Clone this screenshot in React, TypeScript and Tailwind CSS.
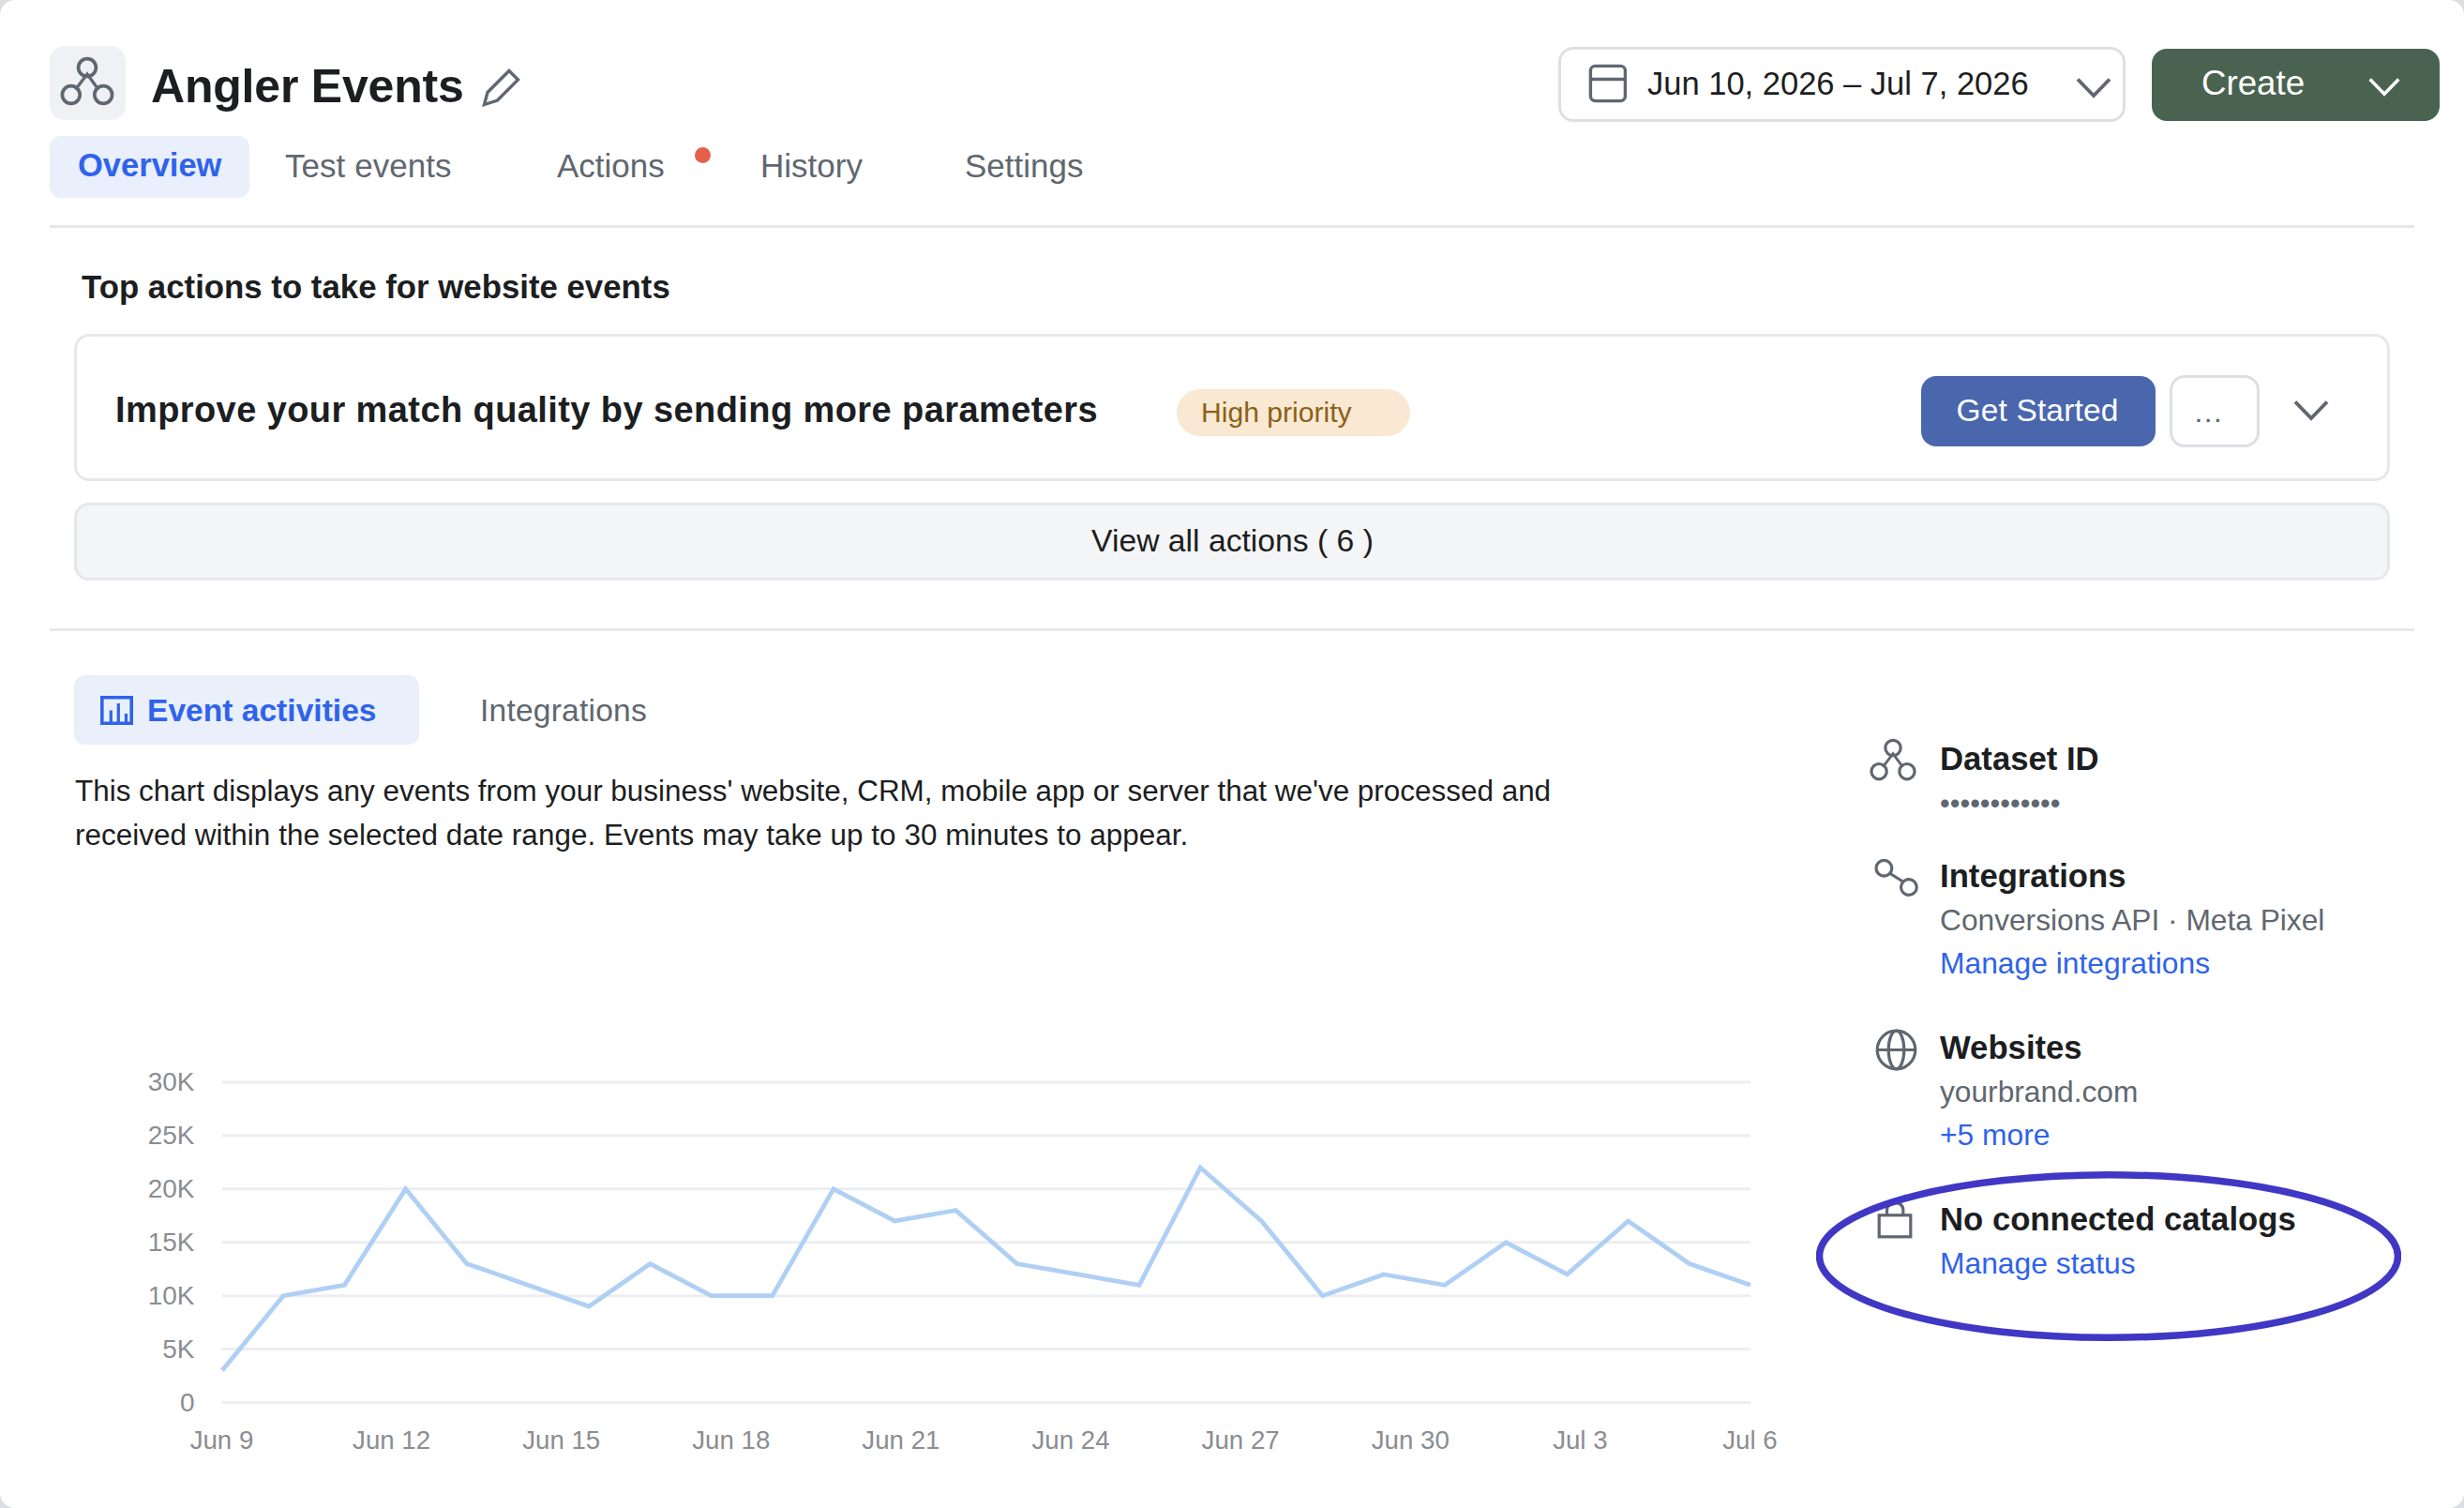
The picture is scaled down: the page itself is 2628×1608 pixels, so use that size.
import React from 'react'

interface IInfoItem {
  title: string
  icon: React.ReactNode
  className: string
  detail?: string
  link?: string
}

const tabs = [
  { label: "Test events", className: "w-[290px] tracking-[0.05px]" },
  { label: "Actions", className: "w-[217px]", dot: true },
  { label: "History", className: "w-[218px]" },
  { label: "Settings", className: "" },
]

// values are in thousands of events
const events = [3, 10, 11, 20, 13, 11, 9, 13, 10, 10, 20, 17, 18, 13, 12, 11, 22, 17, 10, 12, 11, 15, 12, 17, 13, 11]
const yTicks = [30, 25, 20, 15, 10, 5, 0]
const xTicks = ["Jun 9", "Jun 12", "Jun 15", "Jun 18", "Jun 21", "Jun 24", "Jun 27", "Jun 30", "Jul 3", "Jul 6"]

const Chevron = ({ className }: { className: string }) => (
  <svg viewBox="0 0 40 26" className={className} fill="none" stroke="currentColor" strokeWidth="3.9">
    <path d="M3 3.5 L20 21 L37 3.5" />
  </svg>
)

const NetworkIcon = ({ className }: { className: string }) => (
  <svg viewBox="0 0 60 56" className={className} fill="none" stroke="currentColor" strokeWidth="3.7">
    <circle cx="30" cy="13" r="9.4" />
    <circle cx="12.8" cy="42" r="9.4" />
    <circle cx="47.2" cy="42" r="9.4" />
    <path d="M17.5 36.5 L30 20 L42 36.5" strokeWidth="3.3" />
  </svg>
)

const LinkIcon = () => (
  <svg viewBox="0 0 60 60" className="w-[60px] h-[60px]" fill="none" stroke="currentColor" strokeWidth="3.2">
    <circle cx="19.4" cy="14.7" r="8.4" />
    <circle cx="45.9" cy="35" r="8.4" />
    <path d="M26 20.5 L39.5 29" />
  </svg>
)

const GlobeIcon = () => (
  <svg viewBox="0 0 60 60" className="w-[60px] h-[60px]" fill="none" stroke="currentColor" strokeWidth="3.2">
    <circle cx="32.5" cy="25.5" r="20.3" />
    <ellipse cx="32.5" cy="25.5" rx="8.3" ry="20.3" />
    <path d="M12 25.5 H53" />
  </svg>
)

const LockIcon = () => (
  <svg viewBox="0 0 60 60" className="w-[60px] h-[60px]" fill="none" stroke="currentColor" strokeWidth="3.2">
    <rect x="14.2" y="18.8" width="33.6" height="23" />
    <path d="M22.5 18 V13 C22.5 3 39.8 3 39.8 13 V18" />
  </svg>
)

const items: IInfoItem[] = [
  {
    title: "Dataset ID",
    icon: <NetworkIcon className="w-[52px] h-[49px] ml-[3px]" />,
    className: "h-[125px]",
  },
  {
    title: "Integrations",
    icon: <LinkIcon />,
    className: "h-[183px]",
    detail: "Conversions API · Meta Pixel",
    link: "Manage integrations",
  },
  {
    title: "Websites",
    icon: <GlobeIcon />,
    className: "h-[183px]",
    detail: "yourbrand.com",
    link: "+5 more",
  },
  {
    title: "No connected catalogs",
    icon: <LockIcon />,
    className: "relative",
    link: "Manage status",
  },
]

const InfoItem = ({ title, icon, className, detail, link }: IInfoItem) => (
  <div className={`flex ${className}`}>
    <div className="w-[79px] shrink-0 text-[#606770]">{icon}</div>
    <div className="flex flex-col whitespace-nowrap text-[31.8px] leading-[46.5px]">
      <h3 className="text-[34.7px] font-bold">{title}</h3>
      {title === "Dataset ID" && <p className="text-[30.6px] leading-[47px] text-[#606770]">••••••••••••</p>}
      {detail && <p className="text-[31.7px] text-[#606770]">{detail}</p>}
      {link && <a className="text-[#2f63ea]">{link}</a>}
    </div>
    {title === "No connected catalogs" && (
      <svg viewBox="0 0 624 184" className="absolute left-[-53px] top-[-29px] w-[624px] h-[184px]" fill="none">
        <ellipse cx="312" cy="91.5" rx="308.5" ry="86.8" stroke="#4038c4" strokeWidth="7.5" />
      </svg>
    )}
  </div>
)

const EventChart = () => {
  const left = 158
  const width = 1630
  const bottom = 415.5
  const y = (value: number) => bottom - (value / 30) * 341.5
  const points = events.map((value, i) => `${left + (i * width) / (events.length - 1)},${y(value)}`).join(" ")

  return (
    <svg viewBox="0 0 1850 500" className="w-[1850px] h-[500px]" fill="#8a8d91" fontSize="27.7">
      {yTicks.map(tick => (
        <g key={tick}>
          <path d={`M${left} ${y(tick)} H${left + width}`} stroke="#eceef1" strokeWidth="3" />
          <text x="128.5" y={y(tick) + 9} fontSize="28" textAnchor="end">{tick === 0 ? "0" : `${tick}K`}</text>
        </g>
      ))}
      {xTicks.map((label, i) => (
        <text key={label} x={left - 0.5 + (i * width) / 9} y="465" textAnchor="middle">{label}</text>
      ))}
      <polyline points={points} fill="none" stroke="#b0cff4" strokeWidth="4.8" />
    </svg>
  )
}

const Header = () => (
  <header className="flex items-start justify-between h-[145px] pt-[49px] pl-[53px] pr-[26px]">
    <div className="flex">
      <div className="w-[81px] h-[79px] rounded-2xl bg-[#f0f1f4] text-[#606770]">
        <NetworkIcon className="w-[60px] h-[56px] ml-[10px] mt-[10px]" />
      </div>
      <h1 className="ml-[27px] mt-[13px] text-[50px] tracking-[-0.2px] leading-[60px] font-bold">Angler Events</h1>
      <svg viewBox="0 0 44 44" className="w-11 h-11 ml-[17px] mt-[23px] text-[#606770]" fill="none" stroke="currentColor" strokeWidth="3.4">
        <path d="M31 3.5 L40.5 13 L18.5 35 L4.5 39.5 L8 26.5 Z" />
      </svg>
    </div>
    <div className="flex">
      <button className="flex items-center w-[605px] h-[80px] mt-px pl-[29px] rounded-2xl border-3 border-[#dddfe3] text-[34.5px] whitespace-nowrap">
        <svg viewBox="0 0 42 42" className="w-[42px] h-[42px] mb-[2px] text-[#606770]" fill="none" stroke="currentColor" strokeWidth="3.4">
          <rect x="2.4" y="2.4" width="37" height="37.2" rx="5" />
          <path d="M2 16.5 H40" />
        </svg>
        <span className="ml-[21px] w-[456px] text-left leading-[40px] mb-[2px]">Jun 10, 2026 – Jul 7, 2026</span>
        <Chevron className="w-10 h-[26px] mt-[8px] text-[#606770]" />
      </button>
      <button className="flex items-center w-[307px] h-[77px] mt-[3px] ml-[28px] pl-[53px] rounded-2xl bg-[#4a6350] text-white text-[36.7px]">
        <span className="w-[177px] text-left leading-[40px] mb-[3px]">Create</span>
        <Chevron className="w-9 h-6 mt-[5px]" />
      </button>
    </div>
  </header>
)

const App = () => {
  return (
    <div className="w-[2628px] h-[1608px] bg-[#dcdee2] font-['Liberation_Sans',Arial,sans-serif] text-[#1c1e21] overflow-hidden">
      <div className="flex flex-col w-full h-full bg-white rounded-2xl">
        <Header />

        <nav className="flex h-[95px] pl-[53px] text-[35px] leading-[63px] text-[#606770]">
          <div className="w-[213px] h-[66px] pl-[30px] mr-[38px] rounded-xl bg-[#e9effb] text-[34.5px] font-bold text-[#2f63ea]">Overview</div>
          {tabs.map(tab => (
            <div key={tab.label} className={`flex ${tab.className}`}>
              {tab.label}
              {tab.dot && <span className="w-[17px] h-[17px] ml-[32px] mt-[12px] rounded-full bg-[#e4604a]" />}
            </div>
          ))}
        </nav>

        <hr className="h-[3px] mx-[53px] border-0 bg-[#e5e7eb]" />

        <section className="h-[427px] pt-[43px] px-[79px]">
          <h2 className="pl-[8px] text-[34.8px] leading-[40px] font-bold">Top actions to take for website events</h2>
          <div className="flex items-center h-[157px] mt-[30px] pl-[41px] rounded-2xl border-3 border-[#e5e7eb]">
            <h3 className="w-[1132px] mt-[4px] text-[38px] tracking-[0.41px] leading-[46px] font-bold whitespace-nowrap">Improve your match quality by sending more parameters</h3>
            <span className="w-[249px] h-[50px] mt-[10px] pl-[26px] rounded-full bg-[#f9e8d2] text-[30.1px] leading-[49px] text-[#8a6116]">High priority</span>
            <button className="w-[250px] h-[75px] mt-[8px] ml-[545px] pr-[2px] rounded-2xl bg-[#4a67ad] text-[33.5px] tracking-[0.15px] text-white">Get Started</button>
            <button className="w-[96px] h-[77px] mt-[8px] ml-[15px] pl-[22px] pt-[2px] rounded-2xl border-3 border-[#dddfe3] text-left text-[32.2px] text-[#606770]">…</button>
            <Chevron className="w-10 h-[26px] ml-[35px] mt-[6px] text-[#606770]" />
          </div>
          <button className="w-full h-[83px] mt-[23px] pl-px pb-[3px] rounded-2xl border-3 border-[#e5e7eb] bg-[#f4f5f7] text-[33.7px]">View all actions ( 6 )</button>
        </section>

        <hr className="h-[3px] mx-[53px] border-0 bg-[#e5e7eb]" />

        <div className="flex pl-[79px]">
          <div className="w-[1911px] pt-[47px]">
            <div className="flex text-[33.6px] leading-[76px]">
              <div className="flex items-center w-[368px] h-[74px] pl-[28px] rounded-xl bg-[#e9effb] font-bold text-[#2f63ea]">
                <svg viewBox="0 0 35 31" className="w-[35px] h-[31px]" fill="none" stroke="currentColor" strokeWidth="3.6">
                  <path d="M1.8 1.8 H33.2 V29.2 H1.8 Z" />
                  <path d="M11.3 29 V15.5 M19.3 29 V8 M27.5 29 V19" strokeWidth="3.2" />
                </svg>
                <span className="ml-[15px] mt-[2px]">Event activities</span>
              </div>
              <div className="ml-[65px] tracking-[0.2px] text-[#606770]">Integrations</div>
            </div>
            <p className="pl-px mt-[25px] text-[31.45px] leading-[46.5px] whitespace-nowrap">
              This chart displays any events from your business' website, CRM, mobile app or server that we've processed and<br />
              <span className="tracking-[0.03px]">received within the selected date range. Events may take up to 30 minutes to appear.</span>
            </p>
            <div className="mt-[166px]">
              <EventChart />
            </div>
          </div>

          <aside className="pt-[113px]">
            {items.map(item => (
              <InfoItem key={item.title} {...item} />
            ))}
          </aside>
        </div>
      </div>
    </div>
  )
}

export default App
